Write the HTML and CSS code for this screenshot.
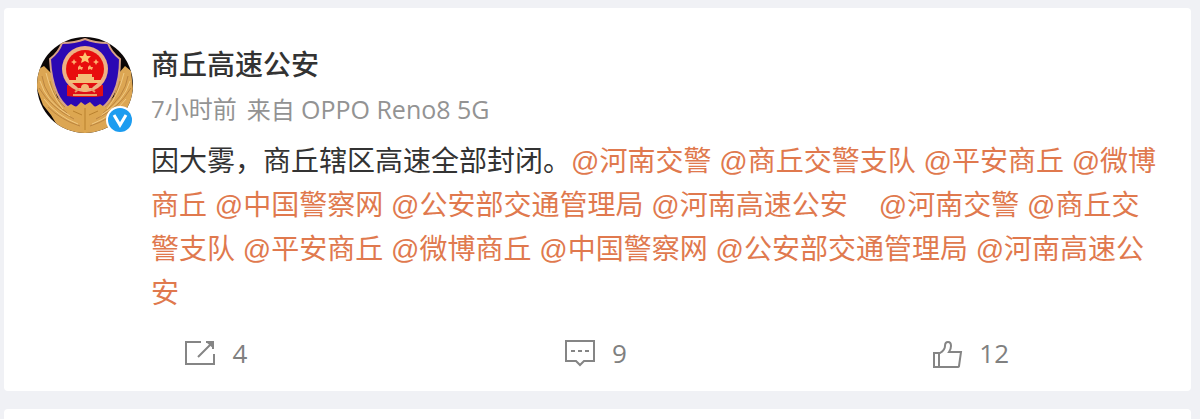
FILE: index.html
```html
<!DOCTYPE html>
<html lang="zh-CN">
<head>
  <meta charset="UTF-8">
  <meta name="viewport" content="width=device-width, initial-scale=1.0">
  <title>商丘高速公安</title>
  <link rel="stylesheet" href="styles.css">
</head>
<body>
  <article class="card">
    <div class="post">
      <a class="avatar" href="#" aria-label="商丘高速公安">
        <svg class="avatar-img" viewBox="0 0 96 96" aria-hidden="true">
          <defs>
            <clipPath id="round"><circle cx="48" cy="48" r="48"/></clipPath>
          </defs>
          <g clip-path="url(#round)">
            <rect width="96" height="96" fill="#0b0606"/>
            <!-- wreath -->
            <path d="M0 33 L7 29 L14 36 L20 60 L30 70 L48 72 L66 70 L77 60 L82 36 L88 29 L94 34 L96 52 L93 72 L84 88 L64 96 H32 L20 88 L14 78 L6 68 L0 52Z" fill="#dca653"/>
            <g fill="none" stroke="#bb8540" stroke-width="1">
              <path d="M5 39 Q8 60 30 76 M2 51 Q14 71 37 82 M11 70 Q24 83 43 89 M13 44 Q17 62 28 70"/>
              <path d="M91 39 Q88 60 66 76 M94 51 Q82 71 59 82 M85 70 Q72 83 53 89 M83 44 Q79 62 68 70"/>
            </g>
            <g fill="none" stroke="#f0c983" stroke-width="1">
              <path d="M3 44 Q9 65 33 79 M7 62 Q20 79 41 87 M9 36 Q14 57 26 72"/>
              <path d="M93 44 Q87 65 63 79 M89 62 Q76 79 55 87 M87 36 Q82 57 70 72"/>
            </g>
            <!-- shield -->
            <path d="M48 2 Q38 6 25 6 Q22 15 13 22 Q14 42 20 56 Q25 67 32 71 L48 70 L65 71 Q72 66 77 55 Q83 42 83 22 Q74 15 71 6 Q58 6 48 2Z" fill="#2b08b4" stroke="#d7a287" stroke-width="2"/>
            <path d="M28 71 L34 67 L39 70 L44 65 L48 68 L53 65 L58 70 L63 67 L69 71 L64 79 L53 81 L51 95 H46 L44 81 L34 79Z" fill="#dda751"/>
            <path d="M48 71 V93 M36 74 L45 78 M61 74 L52 78" fill="none" stroke="#b9812f" stroke-width="1"/>
            <!-- emblem -->
            <path d="M30 48 H66 V59 L58 60 H38 L30 59Z" fill="#e00e15"/>
            <circle cx="48" cy="32" r="23" fill="#edb184"/>
            <circle cx="48" cy="32" r="19" fill="#e80d0d"/>
            <path d="M48 15 L50 19 L54 19 L51 22 L52 26 L48 24 L44 26 L45 22 L42 19 L46 19Z" fill="#ffc36e"/>
            <path d="M37 22 l1 2 2 1 -2 1 -1 2 -1 -2 -2 -1 2 -1Z M59 22 l1 2 2 1 -2 1 -1 2 -1 -2 -2 -1 2 -1Z M43 28 l1 2 2 0 -1 3 -2 -1 -2 1 0 -3Z M53 28 l1 2 2 0 -1 3 -2 -1 -2 1 0 -3Z" fill="#ffad6c"/>
            <path d="M41 37 H55 V40 H57 V43 H64 V46 H32 V43 H39 V40 H41Z" fill="#f3bd78"/>
            <path d="M37 47 H59 L55 51 H41Z" fill="#e00e15"/>
            <circle cx="48" cy="51" r="4" fill="#f3b778"/>
            <path d="M36 58 H60 M42 52 L38 55 M54 52 L58 55" stroke="#e9a067" stroke-width="2"/>
          </g>
        </svg>
        <svg class="badge" viewBox="0 0 28 28" aria-hidden="true">
          <circle cx="14" cy="14" r="14" fill="#fff"/>
          <circle cx="14" cy="14" r="12" fill="#1c9cf0"/>
          <path d="M8 9 L14 19 L20 9" fill="none" stroke="#fff" stroke-width="3"/>
        </svg>
      </a>
      <div class="content">
        <h1 class="name">商丘高速公安</h1>
        <p class="meta"><span>7小时前</span><span>来自 <span class="device">OPPO Reno8 5G</span></span></p>
        <p class="text">因大雾，商丘辖区高速全部封闭。<a href="#">@河南交警</a> <a href="#">@商丘交警支队</a> <a href="#">@平安商丘</a> <a href="#">@微博商丘</a> <a href="#">@中国警察网</a> <a href="#">@公安部交通管理局</a> <a href="#">@河南高速公安</a>&nbsp;&nbsp;&nbsp; <a href="#">@河南交警</a> <a href="#">@商丘交警支队</a> <a href="#">@平安商丘</a> <a href="#">@微博商丘</a> <a href="#">@中国警察网</a> <a href="#">@公安部交通管理局</a> <a href="#">@河南高速公安</a></p>
      </div>
    </div>
    <div class="actions">
      <button type="button" aria-label="转发 4">
        <svg viewBox="0 0 32 32" aria-hidden="true">
          <path d="M17 5 H2 V27 H30 V17 M14 20 L28 6"/>
          <path d="M22 5 H30 V12Z" fill="#858585" stroke="none"/>
          <path d="M22 5 H29 V12"/>
        </svg>
        <span>4</span>
      </button>
      <button type="button" aria-label="评论 9">
        <svg viewBox="0 0 32 32" aria-hidden="true">
          <path d="M2 4 H30 V24 H20 L16 28 L12 24 H2Z"/>
          <path d="M7 14 H11 M14 14 H18 M21 14 H25"/>
        </svg>
        <span>9</span>
      </button>
      <button type="button" class="like" aria-label="赞 12">
        <svg viewBox="0 0 32 32" aria-hidden="true">
          <path d="M3 16 H9 Q14 13 14 9 Q14 5 17 5 Q20 5 20 9 Q20 12 18 15 H30 L28 29 Q28 30 26 30 H3Z"/>
          <path d="M8 16 V30"/>
        </svg>
        <span>12</span>
      </button>
    </div>
  </article>
  <article class="card"></article>
</body>
</html>
```

FILE: styles.css
```css
* {
  box-sizing: border-box;
}

body {
  margin: 0;
  padding: 8px 9px 0 4px;
  background-color: #f0f1f5;
  color: #333;
  font-family: 'Liberation Sans', 'Noto Sans CJK SC', sans-serif;
}

.card {
  min-height: 10px;
  margin-bottom: 18px;
  background-color: #fff;
  border-radius: 4px;
}

.card:last-child {
  margin-bottom: 0;
  border-radius: 4px 4px 0 0;
}

.post {
  display: flex;
  gap: 18px;
  padding: 29px 31px 0 33px;
}

.avatar {
  position: relative;
  flex: none;
  width: 96px;
  height: 96px;
}

.avatar-img {
  display: block;
  width: 96px;
  height: 96px;
}

.badge {
  position: absolute;
  right: -1px;
  bottom: -1px;
  width: 28px;
  height: 28px;
}

.content {
  flex: 1;
  min-width: 0;
}

.name {
  margin: 9px 0 0;
  font-size: 28px;
  font-weight: 500;
  line-height: 40px;
}

.meta {
  display: flex;
  gap: 10px;
  margin: 7px 0 0;
  color: #939393;
  font-family: 'Open Sans', 'Noto Sans CJK SC', sans-serif;
  font-size: 24px;
  line-height: 32px;
}

.device {
  font-size: 25px;
}

.text {
  margin: 14px 0 0;
  font-size: 28px;
  line-height: 44px;
}

.text a {
  color: #e0794e;
  text-decoration: none;
}

.text a:hover {
  text-decoration: underline;
}

.actions {
  display: grid;
  grid-template-columns: repeat(3, 1fr);
  padding: 15px 26px 16px 22px;
}

.actions button {
  display: flex;
  justify-content: center;
  align-items: center;
  gap: 16px;
  padding: 0;
  border: none;
  background: none;
  color: #808080;
  font-family: 'Open Sans', sans-serif;
  font-size: 26px;
  line-height: 44px;
  cursor: pointer;
}

.actions .like {
  padding-right: 10px;
}

.actions svg {
  width: 32px;
  height: 32px;
  fill: none;
  stroke: #858585;
  stroke-width: 2;
}
```
